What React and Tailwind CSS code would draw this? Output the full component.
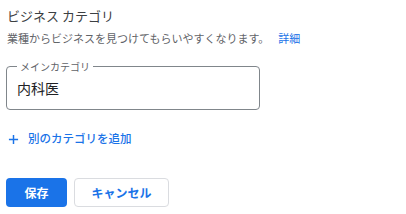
import React from "react";

export default function App() {
  return (
    <div
      className="w-[406px] h-[214px] bg-white pl-[7px] pt-[6px] flex flex-col"
      style={{ fontFamily: '"Noto Sans CJK JP", "Noto Sans", sans-serif' }}
    >
      <div className="h-[20px] leading-[20px] text-[13px] text-[#3c4043]">ビジネス カテゴリ</div>
      <div className="mt-[4px] h-[16px] leading-[16px] text-[11px] text-[#5f6368] flex">
        <span>業種からビジネスを見つけてもらいやすくなります。</span>
        <span className="ml-[9px] text-[#1a73e8]">詳細</span>
      </div>
      <div className="relative mt-[20px] ml-[-1px] w-[254px] h-[44px] border border-[#80868b] rounded-[4px] flex items-center pl-[10px]">
        <span className="absolute left-[10px] top-0 -translate-y-1/2 bg-white px-[3px] text-[10px] leading-[12px] text-[#5f6368]">
          メインカテゴリ
        </span>
        <span className="text-[14px] text-[#202124]">内科医</span>
      </div>
      <div className="mt-[19px] h-[20px] flex items-center text-[#1a73e8]">
        <svg width="11" height="11" viewBox="0 0 12 12" className="ml-[1px]">
          <path d="M6 1v10M1 6h10" stroke="#1a73e8" strokeWidth="1.6" />
        </svg>
        <span className="ml-[9px] text-[11.5px] font-medium">別のカテゴリを追加</span>
      </div>
      <div className="mt-[29px] flex gap-[7px] ml-[-1px]">
        <button className="w-[61px] h-[29px] rounded-[4px] bg-[#1a73e8] text-white text-[12px] font-bold">
          保存
        </button>
        <button className="w-[95px] h-[29px] rounded-[4px] border border-[#dadce0] bg-white text-[#1a73e8] text-[12px] font-bold">
          キャンセル
        </button>
      </div>
    </div>
  );
}
